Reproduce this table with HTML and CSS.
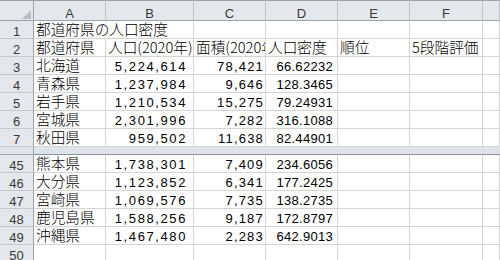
FILE: index.html
```html
<!DOCTYPE html>
<html lang="ja">
<head>
<meta charset="utf-8">
<title>都道府県の人口密度</title>
<link rel="stylesheet" href="styles.css">
</head>
<body>
<div class="sheet">
  <div class="row head">
    <div class="corner"><svg width="9" height="9" viewBox="0 0 9 9"><polygon points="9,0 9,9 0,9" fill="#b9bdc4"/></svg></div>
    <div>A</div><div>B</div><div>C</div><div>D</div><div>E</div><div>F</div><div></div>
  </div>

  <div class="row"><div class="rh">1</div><div class="cell title">都道府県の人口密度</div><div class="cell"></div><div class="cell"></div><div class="cell"></div><div class="cell"></div><div class="cell"></div><div class="cell"></div></div>
  <div class="row"><div class="rh">2</div><div class="cell">都道府県</div><div class="cell">人口(2020年)</div><div class="cell">面積(2020年)</div><div class="cell">人口密度</div><div class="cell">順位</div><div class="cell">5段階評価</div><div class="cell"></div></div>
  <div class="row"><div class="rh">3</div><div class="cell">北海道</div><div class="cell n nb">5,224,614</div><div class="cell n nc">78,421</div><div class="cell n nd">66.62232</div><div class="cell"></div><div class="cell"></div><div class="cell"></div></div>
  <div class="row"><div class="rh">4</div><div class="cell">青森県</div><div class="cell n nb">1,237,984</div><div class="cell n nc">9,646</div><div class="cell n nd">128.3465</div><div class="cell"></div><div class="cell"></div><div class="cell"></div></div>
  <div class="row"><div class="rh">5</div><div class="cell">岩手県</div><div class="cell n nb">1,210,534</div><div class="cell n nc">15,275</div><div class="cell n nd">79.24931</div><div class="cell"></div><div class="cell"></div><div class="cell"></div></div>
  <div class="row"><div class="rh">6</div><div class="cell">宮城県</div><div class="cell n nb">2,301,996</div><div class="cell n nc">7,282</div><div class="cell n nd">316.1088</div><div class="cell"></div><div class="cell"></div><div class="cell"></div></div>
  <div class="row"><div class="rh">7</div><div class="cell">秋田県</div><div class="cell n nb">959,502</div><div class="cell n nc">11,638</div><div class="cell n nd">82.44901</div><div class="cell"></div><div class="cell"></div><div class="cell"></div></div>

  <div class="split"><div class="split-rh"></div><div class="split-body"></div></div>

  <div class="row"><div class="rh">45</div><div class="cell">熊本県</div><div class="cell n nb">1,738,301</div><div class="cell n nc">7,409</div><div class="cell n nd">234.6056</div><div class="cell"></div><div class="cell"></div><div class="cell"></div></div>
  <div class="row"><div class="rh">46</div><div class="cell">大分県</div><div class="cell n nb">1,123,852</div><div class="cell n nc">6,341</div><div class="cell n nd">177.2425</div><div class="cell"></div><div class="cell"></div><div class="cell"></div></div>
  <div class="row"><div class="rh">47</div><div class="cell">宮崎県</div><div class="cell n nb">1,069,576</div><div class="cell n nc">7,735</div><div class="cell n nd">138.2735</div><div class="cell"></div><div class="cell"></div><div class="cell"></div></div>
  <div class="row"><div class="rh">48</div><div class="cell">鹿児島県</div><div class="cell n nb">1,588,256</div><div class="cell n nc">9,187</div><div class="cell n nd">172.8797</div><div class="cell"></div><div class="cell"></div><div class="cell"></div></div>
  <div class="row"><div class="rh">49</div><div class="cell">沖縄県</div><div class="cell n nb">1,467,480</div><div class="cell n nc">2,283</div><div class="cell n nd">642.9013</div><div class="cell"></div><div class="cell"></div><div class="cell"></div></div>
  <div class="row"><div class="rh">50</div><div class="cell"></div><div class="cell"></div><div class="cell"></div><div class="cell"></div><div class="cell"></div><div class="cell"></div><div class="cell"></div></div>
</div>
</body>
</html>
```

FILE: styles.css
```css
* { box-sizing: border-box; }
body { margin: 0; background: #fff; }

.sheet {
  width: 500px;
  height: 260px;
  overflow: hidden;
  font-family: "Noto Sans CJK JP", sans-serif;
}

.row {
  display: grid;
  grid-template-columns: 34px 72px 88px 72px 72px 72px 73px 1fr;
  height: 18px;
}

.row.head { height: 21px; }

.head > div {
  height: 21px;
  padding-top: 4px;
  background: #e4e7ec;
  border-top: 1px solid #9da3ab;
  border-bottom: 1px solid #9da3ab;
  border-right: 1px solid #c0c5cc;
  font: 13px/17px "Liberation Sans", sans-serif;
  text-align: center;
  color: #3a3a3a;
  overflow: hidden;
}

.head > .corner {
  border-right-color: #9da3ab;
  display: flex;
  justify-content: flex-end;
  align-items: flex-end;
  padding: 0 2px 1px 0;
}

.corner svg { display: block; }

.rh {
  height: 18px;
  padding-top: 3px;
  background: #e4e7ec;
  border-right: 1px solid #9da3ab;
  border-bottom: 1px solid #c5cad1;
  font: 13px/15px "Liberation Sans", sans-serif;
  text-align: center;
  color: #3a3a3a;
  overflow: hidden;
}

.cell {
  height: 18px;
  border-right: 1px solid #d4d4d4;
  border-bottom: 1px solid #d4d4d4;
  overflow: hidden;
  white-space: nowrap;
  font-size: 14.67px;
  font-weight: 300;
  line-height: 16px;
  color: #000;
  padding-left: 2px;
}

.cell.title {
  overflow: visible;
  border-right-color: transparent;
}

.n {
  font-family: "Liberation Sans", sans-serif;
  font-weight: 400;
  font-size: 13px;
  line-height: 15px;
  padding-top: 2px;
  text-align: right;
}

.nb { letter-spacing: 1.6px; padding-right: 6px; }
.nc { letter-spacing: 1.2px; padding-right: 1px; }
.nd { letter-spacing: 0.3px; padding-right: 4px; }

.split {
  display: grid;
  grid-template-columns: 34px 1fr;
  height: 8px;
}

.split-rh {
  background: #dfe3ea;
  border-right: 1px solid #9da3ab;
  border-bottom: 1px solid #9da3ab;
}

.split-body {
  background: #dfe3ea;
  border-bottom: 1px solid #8c9199;
}
```
